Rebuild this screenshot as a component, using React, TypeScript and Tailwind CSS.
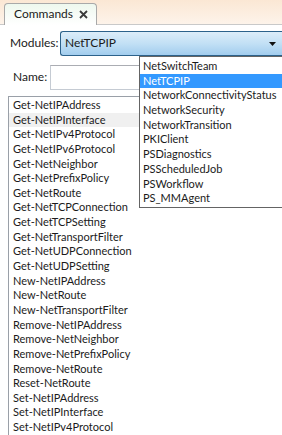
import React from "react";

const commands = [
  "Get-NetIPAddress",
  "Get-NetIPInterface",
  "Get-NetIPv4Protocol",
  "Get-NetIPv6Protocol",
  "Get-NetNeighbor",
  "Get-NetPrefixPolicy",
  "Get-NetRoute",
  "Get-NetTCPConnection",
  "Get-NetTCPSetting",
  "Get-NetTransportFilter",
  "Get-NetUDPConnection",
  "Get-NetUDPSetting",
  "New-NetIPAddress",
  "New-NetRoute",
  "New-NetTransportFilter",
  "Remove-NetIPAddress",
  "Remove-NetNeighbor",
  "Remove-NetPrefixPolicy",
  "Remove-NetRoute",
  "Reset-NetRoute",
  "Set-NetIPAddress",
  "Set-NetIPInterface",
  "Set-NetIPv4Protocol",
];

const modules = [
  "NetSwitchTeam",
  "NetTCPIP",
  "NetworkConnectivityStatus",
  "NetworkSecurity",
  "NetworkTransition",
  "PKIClient",
  "PSDiagnostics",
  "PSScheduledJob",
  "PSWorkflow",
  "PS_MMAgent",
];

export default function App() {
  return (
    <div className="relative w-[282px] h-[435px] overflow-hidden bg-white text-[11px] leading-[14.6px] text-[#1b1b1b] font-['Lato',sans-serif]">
      {/* tab strip */}
      <div className="flex items-end h-[25px] pl-[4px] bg-gradient-to-b from-[#fbe7d4] to-[#fdf3ea] border-b border-[#c9c9c9]">
        <div className="flex items-center h-[22px] w-[93px] -mb-px pl-[9px] gap-[6px] rounded-t-[4px] border border-b-0 border-[#a9a9a9] bg-gradient-to-b from-[#eef8ee] to-white text-[12px]">
          <span>Commands</span>
          <svg width="9" height="9" viewBox="0 0 9 9">
            <path d="M1 1 L8 8 M8 1 L1 8" stroke="#3a3a3a" strokeWidth="1.8" />
          </svg>
        </div>
      </div>

      {/* modules row */}
      <div className="flex items-center mt-[6px] h-[25px] text-[12px]">
        <span className="w-[60px] pl-[10px]">Modules:</span>
        <div className="flex items-center flex-1 h-full pl-[4px] pr-[6px] rounded-l-[3px] border border-r-0 border-[#2c628b] bg-gradient-to-b from-[#dcedf9] via-[#c2e0f5] to-[#a2cdee]">
          <span className="flex-1">NetTCPIP</span>
          <svg width="7" height="4" viewBox="0 0 7 4">
            <path d="M0 0 H7 L3.5 4 Z" fill="#111" />
          </svg>
        </div>
      </div>

      {/* name row */}
      <div className="flex items-center mt-[9px] h-[25px] text-[12px]">
        <span className="w-[50px] pl-[13px]">Name:</span>
        <div className="w-[110px] h-full border border-[#c5cbd3] border-t-[#abadb3] bg-white" />
      </div>

      {/* command list */}
      <div className="mt-[6px] ml-[8px] pt-[1px] border-l border-t border-[#9aa0a8]">
        {commands.map((c, i) => (
          <div
            key={c}
            className={`h-[14.65px] leading-[14.65px] pl-[4px] whitespace-nowrap ${i === 1 ? "bg-[#f0f0f0]" : ""}`}
          >
            {c}
          </div>
        ))}
      </div>

      {/* open dropdown */}
      <div className="absolute top-[56px] left-[139px] w-[150px] pt-[2px] pb-px border border-[#646464] bg-white">
        {modules.map((m) => (
          <div
            key={m}
            className={`h-[14.7px] leading-[14.7px] pl-[3px] whitespace-nowrap ${m === "NetTCPIP" ? "bg-[#3399ff] text-white" : ""}`}
          >
            {m}
          </div>
        ))}
      </div>
    </div>
  );
}
